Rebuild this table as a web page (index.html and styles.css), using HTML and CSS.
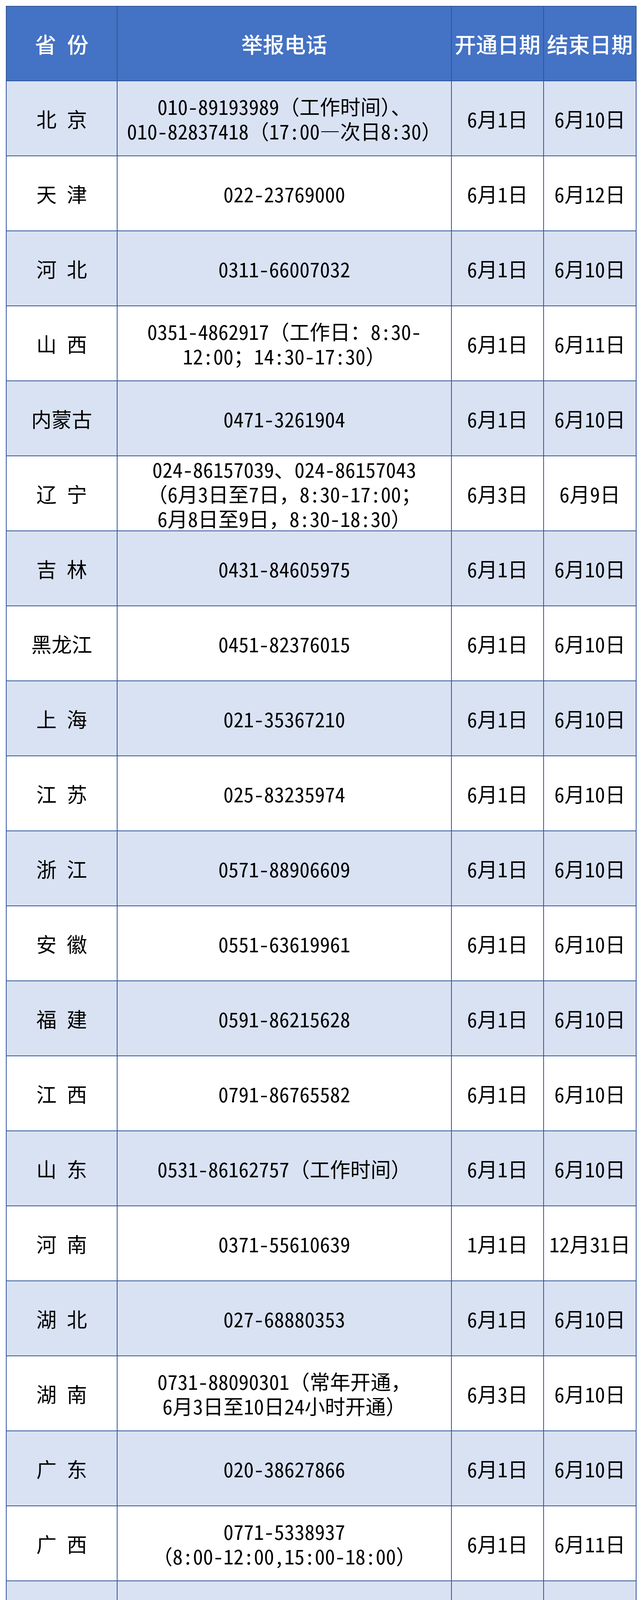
FILE: index.html
```html
<!DOCTYPE html>
<html lang="zh-CN">
<head>
<meta charset="utf-8">
<title>举报电话</title>
<link rel="stylesheet" href="styles.css">
</head>
<body>
<div class="sheet">
  <div class="row head">
    <div class="cell">省　份</div>
    <div class="cell">举报电话</div>
    <div class="cell">开通日期</div>
    <div class="cell">结束日期</div>
  </div>
  <div class="row alt"><div class="cell">北　京</div><div class="cell"><span class="t">010-89193989<span class="fw">（</span>工作时间<span class="fw">）</span>、<br>010-82837418<span class="fw">（</span>17:00—次日8:30<span class="fw">）</span></span></div><div class="cell">6月1日</div><div class="cell">6月10日</div></div>
  <div class="row"><div class="cell">天　津</div><div class="cell">022-23769000</div><div class="cell">6月1日</div><div class="cell">6月12日</div></div>
  <div class="row alt"><div class="cell">河　北</div><div class="cell">0311-66007032</div><div class="cell">6月1日</div><div class="cell">6月10日</div></div>
  <div class="row"><div class="cell">山　西</div><div class="cell"><span class="t">0351-4862917<span class="fw">（</span>工作日<span class="fw">：</span>8:30-<br>12:00<span class="fw">；</span>14:30-17:30<span class="fw">）</span></span></div><div class="cell">6月1日</div><div class="cell">6月11日</div></div>
  <div class="row alt"><div class="cell">内蒙古</div><div class="cell">0471-3261904</div><div class="cell">6月1日</div><div class="cell">6月10日</div></div>
  <div class="row"><div class="cell">辽　宁</div><div class="cell"><span class="t">024-86157039、024-86157043<br><span class="fw">（</span>6月3日至7日<span class="fw">，</span>8:30-17:00<span class="fw">；</span><br>6月8日至9日<span class="fw">，</span>8:30-18:30<span class="fw">）</span></span></div><div class="cell">6月3日</div><div class="cell">6月9日</div></div>
  <div class="row alt"><div class="cell">吉　林</div><div class="cell">0431-84605975</div><div class="cell">6月1日</div><div class="cell">6月10日</div></div>
  <div class="row"><div class="cell">黑龙江</div><div class="cell">0451-82376015</div><div class="cell">6月1日</div><div class="cell">6月10日</div></div>
  <div class="row alt"><div class="cell">上　海</div><div class="cell">021-35367210</div><div class="cell">6月1日</div><div class="cell">6月10日</div></div>
  <div class="row"><div class="cell">江　苏</div><div class="cell">025-83235974</div><div class="cell">6月1日</div><div class="cell">6月10日</div></div>
  <div class="row alt"><div class="cell">浙　江</div><div class="cell">0571-88906609</div><div class="cell">6月1日</div><div class="cell">6月10日</div></div>
  <div class="row"><div class="cell">安　徽</div><div class="cell">0551-63619961</div><div class="cell">6月1日</div><div class="cell">6月10日</div></div>
  <div class="row alt"><div class="cell">福　建</div><div class="cell">0591-86215628</div><div class="cell">6月1日</div><div class="cell">6月10日</div></div>
  <div class="row"><div class="cell">江　西</div><div class="cell">0791-86765582</div><div class="cell">6月1日</div><div class="cell">6月10日</div></div>
  <div class="row alt"><div class="cell">山　东</div><div class="cell"><span class="t">0531-86162757<span class="fw">（</span>工作时间<span class="fw">）</span></span></div><div class="cell">6月1日</div><div class="cell">6月10日</div></div>
  <div class="row"><div class="cell">河　南</div><div class="cell">0371-55610639</div><div class="cell">1月1日</div><div class="cell">12月31日</div></div>
  <div class="row alt"><div class="cell">湖　北</div><div class="cell">027-68880353</div><div class="cell">6月1日</div><div class="cell">6月10日</div></div>
  <div class="row"><div class="cell">湖　南</div><div class="cell"><span class="t">0731-88090301<span class="fw">（</span>常年开通<span class="fw">，</span><br>6月3日至10日24小时开通<span class="fw">）</span></span></div><div class="cell">6月3日</div><div class="cell">6月10日</div></div>
  <div class="row alt"><div class="cell">广　东</div><div class="cell">020-38627866</div><div class="cell">6月1日</div><div class="cell">6月10日</div></div>
  <div class="row"><div class="cell">广　西</div><div class="cell"><span class="t">0771-5338937<br><span class="fw">（</span>8:00-12:00,15:00-18:00<span class="fw">）</span></span></div><div class="cell">6月1日</div><div class="cell">6月11日</div></div>
  <div class="row alt"><div class="cell">海　南</div><div class="cell">0898-65359379</div><div class="cell">6月1日</div><div class="cell">6月12日</div></div>
  <div class="row"><div class="cell">重　庆</div><div class="cell">023-67869200</div><div class="cell">6月1日</div><div class="cell">6月10日</div></div>
  <div class="row alt"><div class="cell">四　川</div><div class="cell">028-85156581</div><div class="cell">6月1日</div><div class="cell">6月9日</div></div>
  <div class="row"><div class="cell">贵　州</div><div class="cell">0851-85952963</div><div class="cell">6月4日</div><div class="cell">6月10日</div></div>
  <div class="row alt"><div class="cell">云　南</div><div class="cell">0871-65154141、0871-65154794</div><div class="cell">6月1日</div><div class="cell">6月16日</div></div>
  <div class="row"><div class="cell">西　藏</div><div class="cell"><span class="t">0891-6650635<br><span class="fw">（</span>9:30-12:30,15:30-18:30<span class="fw">）</span></span></div><div class="cell">6月1日</div><div class="cell">6月10日</div></div>
  <div class="row alt"><div class="cell">陕　西</div><div class="cell">029-85221751</div><div class="cell">5月20日</div><div class="cell">6月9日</div></div>
  <div class="row"><div class="cell">甘　肃</div><div class="cell">0931-8805072、0931-8802172</div><div class="cell">6月1日</div><div class="cell">6月10日</div></div>
  <div class="row alt"><div class="cell">青　海</div><div class="cell">0971-6304890</div><div class="cell">6月1日</div><div class="cell">6月11日</div></div>
  <div class="row"><div class="cell">宁　夏</div><div class="cell">0951-5559157</div><div class="cell">6月1日</div><div class="cell">6月10日</div></div>
  <div class="row alt"><div class="cell">新　疆</div><div class="cell">0991-8758128</div><div class="cell">1月1日</div><div class="cell">12月31日</div></div>
  <div class="row"><div class="cell">教育部<br>教育考试院</div><div class="cell">010-62790357</div><div class="cell">6月1日</div><div class="cell">6月10日</div></div>
</div>
</body>
</html>
```

FILE: styles.css
```css
html, body {
  margin: 0;
  padding: 0;
  background: #ffffff;
}

body {
  font-family: "Noto Sans CJK SC", "Noto Sans", sans-serif;
  color: #000000;
}

.sheet {
  box-sizing: border-box;
  width: 1615px;
  margin: 15px 0 0 15px;
  border-left: 2px solid #2f5597;
  border-top: 2px solid #2f5597;
  display: flex;
  flex-direction: column;
}

.row {
  box-sizing: border-box;
  display: grid;
  grid-template-columns: 284px 856px 236px 237px;
  height: 192px;
  flex: none;
  border-bottom: 2px solid #2f5597;
  background: #ffffff;
}

.row.alt {
  background: #d9e2f3;
}

.row.head {
  height: 191px;
  background: #4472c4;
}

.cell {
  box-sizing: border-box;
  border-right: 2px solid #2f5597;
  display: flex;
  align-items: center;
  justify-content: center;
  text-align: center;
  font-size: 52px;
  line-height: 63px;
  font-feature-settings: "hwid" 1;
  white-space: nowrap;
}

.t {
  display: block;
}

.fw {
  font-feature-settings: normal;
}

.head .cell {
  color: #ffffff;
  font-size: 55px;
  font-weight: 500;
}
```
